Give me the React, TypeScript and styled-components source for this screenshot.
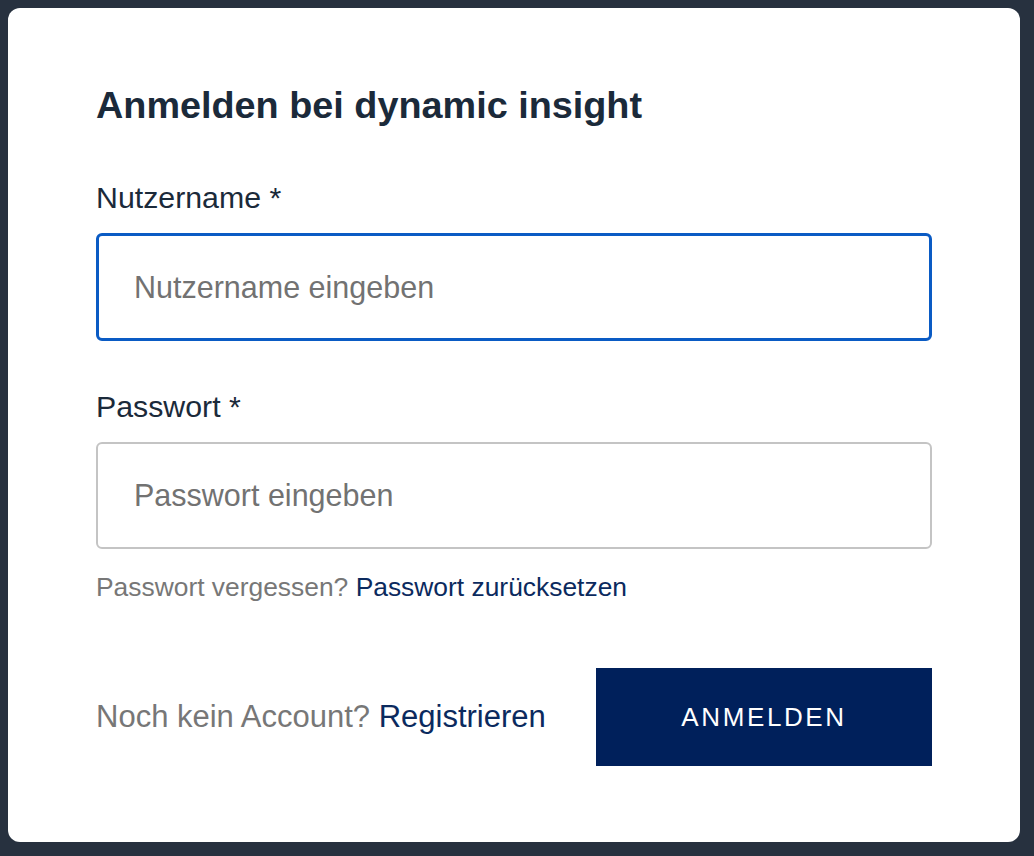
import React from "react";
import styled, { createGlobalStyle } from "styled-components";

const ink = "#1b2a3a";
const navy = "#00205b";
const linkBlue = "#0b2a5e";
const muted = "#777777";

const GlobalStyle = createGlobalStyle`
  html, body {
    margin: 0;
    background: #27313f;
  }
  body {
    padding: 8px;
    font-family: "Liberation Sans", Arial, sans-serif;
  }
`;

const Card = styled.div`
  box-sizing: border-box;
  width: 1012px;
  height: 834px;
  background: #ffffff;
  border-radius: 12px;
  padding: 74px 88px 76px;
  display: flex;
  flex-direction: column;
`;

const Title = styled.h1`
  margin: 0;
  font-size: 37.8px;
  line-height: 46px;
  font-weight: 700;
  color: ${ink};
`;

const Form = styled.form`
  display: flex;
  flex-direction: column;
  margin-top: 52px;
`;

const Field = styled.div<{ $gap?: number }>`
  display: flex;
  flex-direction: column;
  gap: 17px;
  margin-top: ${(p) => p.$gap ?? 0}px;
`;

const Label = styled.label`
  font-size: 30.3px;
  line-height: 36px;
  color: ${ink};
`;

const Input = styled.input<{ $focused?: boolean }>`
  box-sizing: border-box;
  width: 100%;
  height: ${(p) => (p.$focused ? 108 : 107)}px;
  padding: 0 ${(p) => (p.$focused ? 35 : 36)}px;
  border: ${(p) => (p.$focused ? "3px solid #0a5bc4" : "2px solid #c4c4c4")};
  border-radius: 6px;
  font-family: inherit;
  font-size: 30.5px;
  color: ${ink};
  outline: none;
  background: #fff;

  &::placeholder {
    color: #727272;
  }
`;

const Hint = styled.p`
  margin: 22px 0 0;
  font-size: 26.4px;
  line-height: 32px;
  color: ${muted};
`;

const Link = styled.a`
  color: ${linkBlue};
  text-decoration: none;
  cursor: pointer;
`;

const Footer = styled.div`
  margin-top: auto;
  display: flex;
  align-items: center;
  justify-content: space-between;
`;

const Register = styled.span`
  font-size: 31px;
  line-height: 36px;
  color: ${muted};
`;

const SubmitButton = styled.button`
  width: 336px;
  height: 98px;
  border: none;
  border-radius: 0;
  background: ${navy};
  color: #ffffff;
  font-family: inherit;
  font-size: 26px;
  letter-spacing: 2.6px;
  text-transform: uppercase;
  cursor: pointer;
`;

export default function App() {
  return (
    <>
      <GlobalStyle />
      <Card>
        <Title>Anmelden bei dynamic insight</Title>
        <Form onSubmit={(e) => e.preventDefault()}>
          <Field>
            <Label htmlFor="user">Nutzername *</Label>
            <Input id="user" $focused placeholder="Nutzername eingeben" />
          </Field>
          <Field $gap={48}>
            <Label htmlFor="pass">Passwort *</Label>
            <Input id="pass" type="password" placeholder="Passwort eingeben" />
          </Field>
          <Hint>
            Passwort vergessen? <Link>Passwort zurücksetzen</Link>
          </Hint>
        </Form>
        <Footer>
          <Register>
            Noch kein Account? <Link>Registrieren</Link>
          </Register>
          <SubmitButton type="submit">Anmelden</SubmitButton>
        </Footer>
      </Card>
    </>
  );
}
